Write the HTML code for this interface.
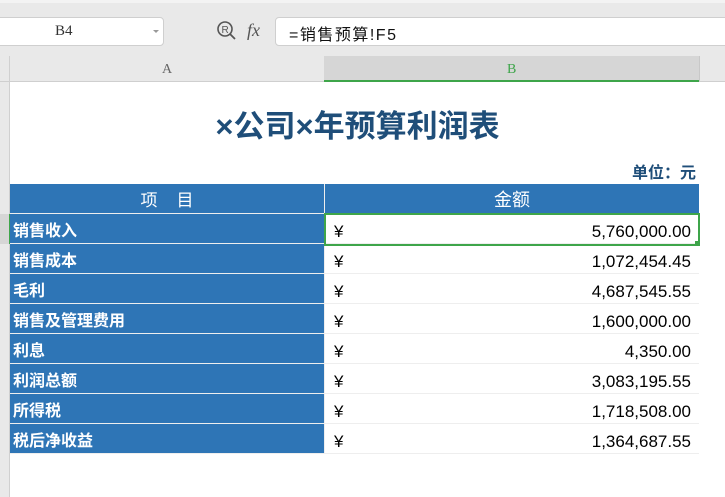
<!DOCTYPE html>
<html><head><meta charset="utf-8"><style>
body{margin:0;width:725px;height:497px;overflow:hidden;background:#fff;font-family:"Liberation Sans","Noto Sans CJK SC",sans-serif;position:relative}
.a{position:absolute}
</style></head><body>
<div class="a" style="left:0;top:0;width:725px;height:56px;background:#e9e9e9"></div>
<div class="a" style="left:0;top:0;width:725px;height:3px;background:#f3f3f3"></div>
<div class="a" style="left:-6px;top:17px;width:168px;height:27px;background:#fff;border:1px solid #cfcfcf;border-radius:4px"></div>
<div class="a" style="left:55px;top:23px;font-family:'Liberation Serif',serif;font-size:15px;color:#333">B4</div>
<div class="a" style="left:153px;top:30px;width:0;height:0;border-left:3px solid transparent;border-right:3px solid transparent;border-top:3px solid #999"></div>
<svg class="a" style="left:216px;top:20px" width="22" height="22" viewBox="0 0 22 22"><circle cx="9" cy="9" r="7" fill="none" stroke="#555" stroke-width="1.6"/><text x="5.5" y="13" font-size="10" fill="#555" font-family="Liberation Sans">R</text><line x1="14" y1="14" x2="19" y2="19" stroke="#555" stroke-width="1.8"/></svg>
<div class="a" style="left:247px;top:20px;font-family:'Liberation Serif',serif;font-style:italic;font-size:18px;color:#555">fx</div>
<div class="a" style="left:275px;top:17px;width:460px;height:27px;background:#fff;border:1px solid #cfcfcf;border-radius:4px"></div>
<div class="a" style="left:289px;top:21px;font-size:16px;color:#111;letter-spacing:1.5px">=销售预算!F5</div>
<div class="a" style="left:0;top:56px;width:725px;height:25px;background:#e9e9e9;border-bottom:1px solid #cfcfcf"></div>
<div class="a" style="left:9px;top:56px;width:1px;height:441px;background:#d0d0d0"></div>
<div class="a" style="left:324px;top:56px;width:375px;height:24px;background:#d6d6d6;border-bottom:2px solid #3ea54a"></div>
<div class="a" style="left:699px;top:56px;width:1px;height:25px;background:#c8c8c8"></div>
<div class="a" style="left:162px;top:62px;font-family:'Liberation Serif',serif;font-size:14px;color:#666">A</div>
<div class="a" style="left:507px;top:62px;font-family:'Liberation Serif',serif;font-size:14px;color:#3ea54a">B</div>
<div class="a" style="left:0;top:82px;width:9px;height:415px;background:#e9e9e9"></div>
<div class="a" style="left:0;top:214px;width:9px;height:30px;background:#d6d6d6;border-right:1px solid #3ea54a"></div>
<div class="a" style="left:0;top:101px;width:715px;text-align:center;font-size:31px;font-weight:bold;color:#1f4e79">×公司×年预算利润表</div>
<div class="a" style="left:600px;top:159px;width:96px;text-align:right;font-size:16px;font-weight:bold;color:#1f4e79">单位：元</div>
<div class="a" style="left:10px;top:184px;width:689px;height:270px;background:#eee"></div>
<div id="t"></div>
<script>
var rows=[["销售收入","5,760,000.00"],["销售成本","1,072,454.45"],["毛利","4,687,545.55"],["销售及管理费用","1,600,000.00"],["利息","4,350.00"],["利润总额","3,083,195.55"],["所得税","1,718,508.00"],["税后净收益","1,364,687.55"]];
var h='<div class="a" style="left:10px;top:184px;width:314px;height:29px;background:#2e75b6;color:#fff;font-size:17px;text-align:center;line-height:33px">项&nbsp;&nbsp;&nbsp;&nbsp;目</div><div class="a" style="left:325px;top:184px;width:374px;height:29px;background:#2e75b6;color:#fff;font-size:18px;text-align:center;line-height:33px">金额</div>';
rows.forEach(function(r,i){var y=214+i*30;
h+='<div class="a" style="left:10px;top:'+y+'px;width:314px;height:29px;background:#2e75b6;color:#fff;font-size:16px;font-weight:bold;line-height:35px;padding-left:3px;box-sizing:border-box">'+r[0]+'</div>';
h+='<div class="a" style="left:325px;top:'+y+'px;width:374px;height:29px;background:#fff;font-size:17px;line-height:35px;color:#000"><span style="position:absolute;left:9px">¥</span><span style="position:absolute;right:8px">'+r[1]+'</span></div>';});
h+='<div class="a" style="left:324px;top:213px;width:372px;height:29px;border:2px solid #3ea54a"></div><div class="a" style="left:695px;top:241px;width:5px;height:5px;background:#3ea54a"></div>';
document.getElementById('t').innerHTML=h;
</script>
</body></html>
